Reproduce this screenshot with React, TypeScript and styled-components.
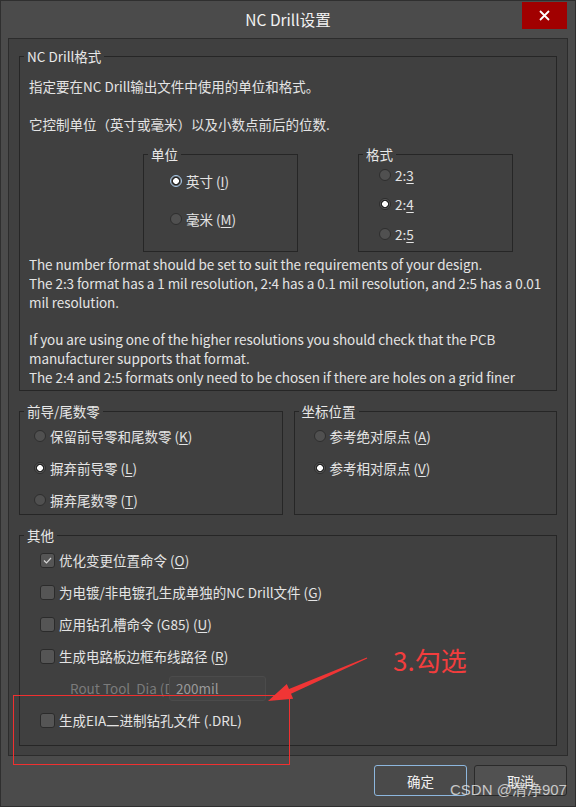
import React from 'react';
import styled, { createGlobalStyle } from 'styled-components';

const GlobalStyle = createGlobalStyle`
  html, body {
    margin: 0;
    padding: 0;
    background: #4b4b4b;
  }
  body {
    font-family: "Noto Sans CJK SC", "Noto Sans", sans-serif;
  }
`;

const Window = styled.div`
  position: relative;
  box-sizing: border-box;
  width: 576px;
  height: 807px;
  display: flex;
  flex-direction: column;
  background: #4b4b4b;
  border: 1px solid #2f2f2f;
  color: #e4e4e4;
  font-size: 13.5px;
  overflow: hidden;
`;

const TitleBar = styled.div`
  height: 37px;
  display: grid;
  grid-template-columns: 1fr auto 1fr;
  align-items: start;
`;
const Title = styled.div`
  grid-column: 2;
  font-size: 15.5px;
  line-height: 37px;
  color: #f2f2f2;
`;
const CloseButton = styled.div`
  justify-self: end;
  margin: 1px 8px 0 0;
  width: 45px;
  height: 27px;
  display: flex;
  align-items: center;
  justify-content: center;
  background: #a10000;
`;

const Panel = styled.div`
  box-sizing: border-box;
  margin: 0 7px;
  padding: 8px 10px 9px;
  display: flex;
  flex-direction: column;
  background: #404040;
  border: 1px solid #2c2c2c;
`;

const Group = styled.fieldset<{ $height?: number; $top?: number }>`
  box-sizing: border-box;
  margin: ${p => p.$top ?? 0}px 0 0;
  padding: 0;
  min-width: 0;
  border: 1px solid #262626;
  ${p => (p.$height ? `height: ${p.$height}px;` : '')}
`;
const Legend = styled.legend`
  margin-left: 4px;
  padding: 0 3px;
  font-size: 13.5px;
  line-height: 18px;
  color: #e8e8e8;
`;

const GroupBody = styled.div<{ $pad: string; $gap?: number }>`
  display: flex;
  flex-direction: column;
  padding: ${p => p.$pad};
  gap: ${p => p.$gap ?? 0}px;
`;

const Line = styled.div`
  line-height: 19px;
  min-height: 19px;
`;

const SubRow = styled.div`
  display: flex;
  gap: 60px;
  margin: 11px 0 0 114px;
`;

const SmallGroup = styled(Group)`
  width: 155px;
  height: 107px;
`;

const Para = styled.div`
  margin-top: 3px;
  height: 135px;
  overflow: hidden;
  line-height: 18.8px;
  letter-spacing: -0.08px;
`;

const Split = styled.div`
  display: grid;
  grid-template-columns: 1fr 1fr;
  gap: 11px;
  margin-top: 11px;
`;

const Option = styled.label<{ $h?: number }>`
  display: flex;
  align-items: center;
  gap: 4px;
  height: ${p => p.$h ?? 19}px;
  white-space: nowrap;
`;

const RadioDot = styled.span<{ $checked?: boolean; $focus?: boolean }>`
  box-sizing: border-box;
  flex: none;
  width: 12px;
  height: 12px;
  border-radius: 50%;
  border: 1px solid ${p => (p.$focus ? '#a8cbec' : '#2e2e2e')};
  background: ${p =>
    p.$checked
      ? 'radial-gradient(circle, #ffffff 0 2.6px, #262626 3.2px 4px, #575757 4.4px)'
      : '#505050'};
`;

const Box = styled.span`
  box-sizing: border-box;
  flex: none;
  width: 15px;
  height: 15px;
  border-radius: 3px;
  border: 1px solid #2b2b2b;
  background: #555555;
  display: flex;
  align-items: center;
  justify-content: center;
`;

const Key = styled.span`
  text-decoration: underline;
  text-underline-offset: 2px;
`;

const OtherRow = styled.div`
  display: flex;
  align-items: center;
  height: 32px;
  padding-left: 30px;
`;
const DimLabel = styled.span`
  width: 99px;
  overflow: hidden;
  white-space: pre;
  color: #7b7b7b;
`;
const Field = styled.div`
  box-sizing: border-box;
  width: 97px;
  height: 25px;
  padding-left: 6px;
  display: flex;
  align-items: center;
  background: #434343;
  border: 1px solid #4b4b4b;
  border-radius: 3px;
  color: #9a9a9a;
`;

const Buttons = styled.div`
  display: flex;
  justify-content: flex-end;
  gap: 7px;
  margin-top: 9px;
  padding-right: 8px;
`;
const Button = styled.div<{ $primary?: boolean }>`
  box-sizing: border-box;
  width: 93px;
  height: 31px;
  display: flex;
  align-items: center;
  justify-content: center;
  border-radius: 3px;
  background: ${p => (p.$primary ? '#4a4a4a' : '#515151')};
  border: 1px solid ${p => (p.$primary ? '#8db7de' : '#2a2a2a')};
  color: #f0f0f0;
  font-size: 13.5px;
`;

const Overlay = styled.div`
  position: absolute;
  inset: 0;
  pointer-events: none;
`;
const Note = styled.div`
  position: absolute;
  left: 392px;
  top: 641px;
  font-size: 26px;
  line-height: 36px;
  color: #f23d3d;
`;
const Frame = styled.div`
  position: absolute;
  left: 12px;
  top: 694px;
  width: 277px;
  height: 70px;
  box-sizing: border-box;
  border: 1px solid #f03030;
`;
const ArrowSvg = styled.svg`
  position: absolute;
  left: 0;
  top: 0;
`;
const Watermark = styled.div`
  position: absolute;
  left: 449px;
  top: 779px;
  font-family: "Liberation Sans", "Noto Sans CJK SC", sans-serif;
  font-size: 15px;
  line-height: 20px;
  color: rgba(235, 235, 235, 0.78);
  white-space: nowrap;
`;

const Radio = ({ checked, focus, children }: { checked?: boolean; focus?: boolean; children: React.ReactNode }) => (
  <Option>
    <RadioDot $checked={checked} $focus={focus} />
    <span>{children}</span>
  </Option>
);

const Check = ({ checked, children }: { checked?: boolean; children: React.ReactNode }) => (
  <Option $h={32}>
    <Box>
      {checked && (
        <svg width="9" height="7" viewBox="0 0 9 7">
          <path d="M1 3.5 L3.5 6 L8 1" fill="none" stroke="#d6d6d6" strokeWidth="1.2" />
        </svg>
      )}
    </Box>
    <span>{children}</span>
  </Option>
);

const App = () => (
  <>
    <GlobalStyle />
    <Window>
      <TitleBar>
        <Title>NC Drill设置</Title>
        <CloseButton>
          <svg width="11" height="11" viewBox="0 0 11 11">
            <path d="M1 1 L10 10 M10 1 L1 10" stroke="#fff" strokeWidth="1.8" />
          </svg>
        </CloseButton>
      </TitleBar>

      <Panel>
        <Group>
          <Legend>NC Drill格式</Legend>
          <GroupBody $pad="12px 9px 0">
            <Line>指定要在NC Drill输出文件中使用的单位和格式。</Line>
            <Line />
            <Line>它控制单位（英寸或毫米）以及小数点前后的位数.</Line>
            <SubRow>
              <SmallGroup>
                <Legend>单位</Legend>
                <GroupBody $pad="8px 0 0 26px" $gap={19}>
                  <Radio checked focus>英寸 (<Key>I</Key>)</Radio>
                  <Radio>毫米 (<Key>M</Key>)</Radio>
                </GroupBody>
              </SmallGroup>
              <SmallGroup>
                <Legend>格式</Legend>
                <GroupBody $pad="2px 0 0 20px" $gap={10.5}>
                  <Radio>2:<Key>3</Key></Radio>
                  <Radio checked>2:<Key>4</Key></Radio>
                  <Radio>2:<Key>5</Key></Radio>
                </GroupBody>
              </SmallGroup>
            </SubRow>
            <Para>
              The number format should be set to suit the requirements of your design.
              <br />
              The 2:3 format has a 1 mil resolution, 2:4 has a 0.1 mil resolution, and 2:5 has a 0.01 mil resolution.
              <br />
              <br />
              If you are using one of the higher resolutions you should check that the PCB manufacturer supports that format.
              <br />
              The 2:4 and 2:5 formats only need to be chosen if there are holes on a grid finer
              <br />
              than 1 mil.
            </Para>
          </GroupBody>
        </Group>

        <Split>
          <Group $height={113}>
            <Legend>前导/尾数零</Legend>
            <GroupBody $pad="6px 0 0 14px" $gap={13}>
              <Radio>保留前导零和尾数零 (<Key>K</Key>)</Radio>
              <Radio checked>摒弃前导零 (<Key>L</Key>)</Radio>
              <Radio>摒弃尾数零 (<Key>T</Key>)</Radio>
            </GroupBody>
          </Group>
          <Group $height={113}>
            <Legend>坐标位置</Legend>
            <GroupBody $pad="6px 0 0 19px" $gap={13}>
              <Radio>参考绝对原点 (<Key>A</Key>)</Radio>
              <Radio checked>参考相对原点 (<Key>V</Key>)</Radio>
            </GroupBody>
          </Group>
        </Split>

        <Group $top={11}>
          <Legend>其他</Legend>
          <GroupBody $pad="0 0 9px 20px">
            <Check checked>优化变更位置命令 (<Key>O</Key>)</Check>
            <Check>为电镀/非电镀孔生成单独的NC Drill文件 (<Key>G</Key>)</Check>
            <Check>应用钻孔槽命令 (G85) (<Key>U</Key>)</Check>
            <Check>生成电路板边框布线路径 (<Key>R</Key>)</Check>
            <OtherRow>
              <DimLabel>Rout Tool  Dia (D</DimLabel>
              <Field>200mil</Field>
            </OtherRow>
            <Check>生成EIA二进制钻孔文件 (.DRL)</Check>
          </GroupBody>
        </Group>
      </Panel>

      <Buttons>
        <Button $primary>确定</Button>
        <Button>取消</Button>
      </Buttons>

      <Overlay>
        <Note>3.勾选</Note>
        <Frame />
        <ArrowSvg width="576" height="807" viewBox="0 0 576 807">
          <polygon
            points="365.8,656.4 288,688.1 285.8,683.1 267,700 292.2,697.7 290,692.7 366.2,657.6"
            fill="#f03535"
          />
        </ArrowSvg>
        <Watermark>CSDN @清净907</Watermark>
      </Overlay>
    </Window>
  </>
);

export default App;
